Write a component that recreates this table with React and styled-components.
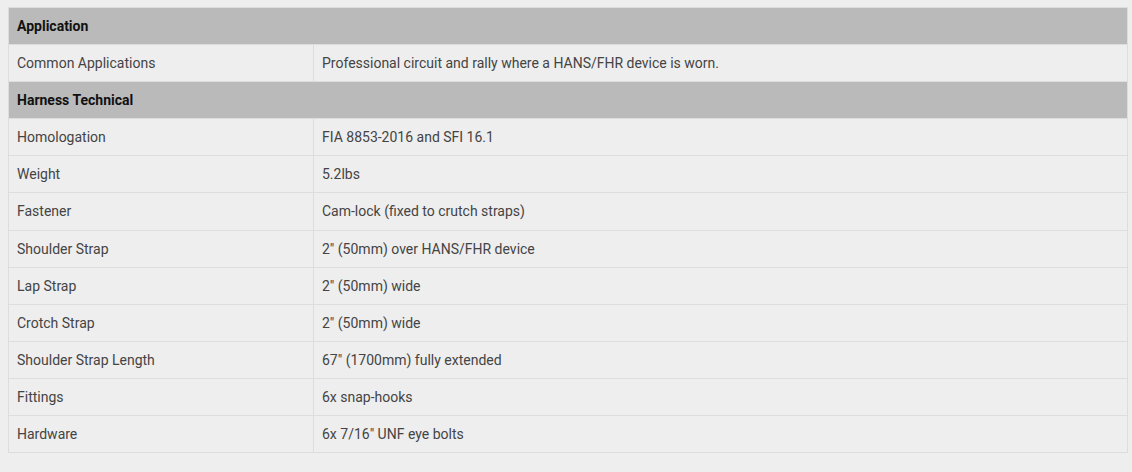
import React from "react";
import styled, { createGlobalStyle } from "styled-components";

const Global = createGlobalStyle`
  html, body { margin: 0; background: #eeeeee; }
  body { padding: 7px 4px 0 8px; font-family: Roboto, "Liberation Sans", sans-serif; }
`;

const Table = styled.table`
  width: 1120px;
  border-collapse: collapse;
  font-size: 14px;
  line-height: 20.1px;
  color: #444444;
  background: #eeeeee;
`;

const HeadCell = styled.td`
  background: #bababa;
  color: #111111;
  font-weight: 700;
  padding: 8px 8px;
  border: 1px solid #dddddd;
`;

const Cell = styled.td`
  padding: 8px 8px;
  border: 1px solid #dddddd;
  width: ${(p) => (p.$label ? "288px" : "auto")};
`;

const sections = [
  {
    title: "Application",
    rows: [["Common Applications", "Professional circuit and rally where a HANS/FHR device is worn."]],
  },
  {
    title: "Harness Technical",
    rows: [
      ["Homologation", "FIA 8853-2016 and SFI 16.1"],
      ["Weight", "5.2lbs"],
      ["Fastener", "Cam-lock (fixed to crutch straps)"],
      ["Shoulder Strap", '2" (50mm) over HANS/FHR device'],
      ["Lap Strap", '2" (50mm) wide'],
      ["Crotch Strap", '2" (50mm) wide'],
      ["Shoulder Strap Length", '67" (1700mm) fully extended'],
      ["Fittings", "6x snap-hooks"],
      ["Hardware", '6x 7/16" UNF eye bolts'],
    ],
  },
];

export default function App() {
  return (
    <>
      <Global />
      <Table>
        <tbody>
          {sections.map((s) => (
            <React.Fragment key={s.title}>
              <tr>
                <HeadCell colSpan={2}>{s.title}</HeadCell>
              </tr>
              {s.rows.map(([k, v]) => (
                <tr key={k}>
                  <Cell $label>{k}</Cell>
                  <Cell>{v}</Cell>
                </tr>
              ))}
            </React.Fragment>
          ))}
        </tbody>
      </Table>
    </>
  );
}
